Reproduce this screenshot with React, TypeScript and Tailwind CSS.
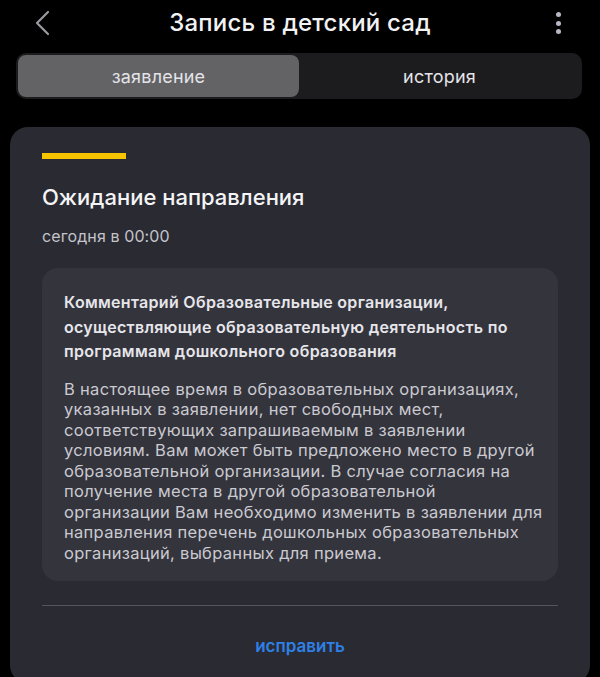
const FONT = { fontFamily: "Inter, 'Noto Sans', sans-serif" };

const BODY = [
  "В настоящее время в образовательных организациях,",
  "указанных в заявлении, нет свободных мест,",
  "соответствующих запрашиваемым в заявлении",
  "условиям. Вам может быть предложено место в другой",
  "образовательной организации. В случае согласия на",
  "получение места в другой образовательной",
  "организации Вам необходимо изменить в заявлении для",
  "направления перечень дошкольных образовательных",
  "организаций, выбранных для приема.",
];

export default function App() {
  return (
    <div style={FONT} className="h-[677px] w-[600px] overflow-hidden bg-black">
      {/* Header */}
      <header className="relative flex h-[46px] items-center justify-center">
        <svg
          className="absolute left-[33px] top-[10px]"
          width="18"
          height="26"
          viewBox="0 0 18 26"
          fill="none"
        >
          <path
            d="M15 2 4 13l11 11"
            stroke="#9a9aa2"
            strokeWidth="2.2"
            strokeLinecap="round"
            strokeLinejoin="round"
          />
        </svg>
        <h1 className="text-[24px] font-medium tracking-[0.2px] text-[#f2f2f4]">
          Запись в детский сад
        </h1>
        <div className="absolute right-[39px] top-[12px] flex flex-col gap-[3.5px]">
          <span className="h-[5px] w-[5px] rounded-full bg-[#b8b8c4]" />
          <span className="h-[5px] w-[5px] rounded-full bg-[#b8b8c4]" />
          <span className="h-[5px] w-[5px] rounded-full bg-[#b8b8c4]" />
        </div>
      </header>

      {/* Tabs */}
      <div className="mt-[7px] ml-4 mr-[18px] grid h-[46px] grid-cols-2 rounded-[10px] bg-[#1c1c1f] p-[2px]">
        <button className="rounded-[8px] bg-[#636366] text-[18px] tracking-[0.2px] text-[#e4e4e8]">
          заявление
        </button>
        <button className="text-[18px] tracking-[0.2px] text-[#e4e4e8]">история</button>
      </div>

      {/* Card */}
      <section className="mx-2.5 mt-[28px] h-[556px] rounded-[18px] bg-[#2a2a32] px-8 pt-[26px]">
        <div className="h-[6px] w-[84px] bg-[#f6c500]" />
        <h2 className="mt-[24px] text-[22px] leading-[28px] font-medium text-[#f4f4f6]">
          Ожидание направления
        </h2>
        <p className="mt-[15px] text-[16px] leading-[20px] tracking-[0.1px] text-[#c4c4ca]">
          сегодня в 00:00
        </p>

        <div className="mt-[22px] rounded-[16px] bg-[#34343d] pl-[22px] pr-[12px] pt-[22px] pb-[18px]">
          <p className="text-[16px] leading-[24.5px] font-semibold tracking-[0.3px] text-[#e6e6ea]">
            Комментарий Образовательные организации,
            <br />
            осуществляющие образовательную деятельность по
            <br />
            программам дошкольного образования
          </p>
          <p className="mt-[15px] text-[16.5px] leading-[20.5px] tracking-[0.3px] whitespace-nowrap text-[#cacad0]">
            {BODY.map((line) => (
              <span key={line} className="block">
                {line}
              </span>
            ))}
          </p>
        </div>

        <div className="mt-[24px] h-px bg-[#55555e]" />

        <div className="mt-[28px] text-center">
          <button className="text-[17px] leading-[24px] font-semibold text-[#2f80e6]">
            исправить
          </button>
        </div>
      </section>
    </div>
  );
}
